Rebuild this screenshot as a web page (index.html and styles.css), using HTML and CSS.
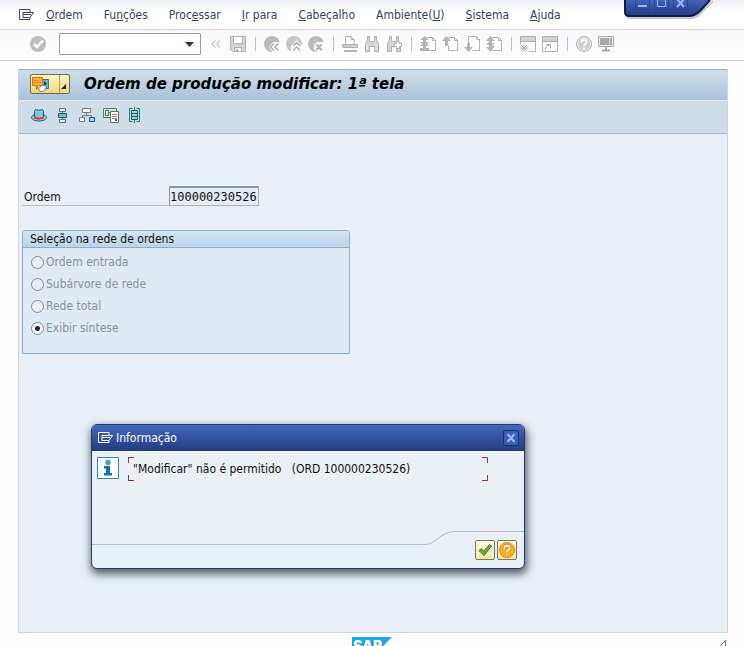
FILE: index.html
```html
<!DOCTYPE html>
<html lang="pt">
<head>
<meta charset="utf-8">
<meta name="viewport" content="width=device-width, initial-scale=1">
<title>Ordem de produção modificar: 1ª tela</title>
<link rel="stylesheet" href="styles.css">
</head>
<body>
<nav class="menubar">
  <button class="menu-icon" aria-label="Menu"><svg width="16" height="12" viewBox="0 0 16 12" fill="none" stroke="#3b4469"><path d="M11 3V.5H.5v10H11V9M4 3.500H14.500L11 8.500H4zM4 5.500h8"/></svg></button>
  <a href="#"><u>O</u>rdem</a>
  <a href="#">Fu<u>n</u>ções</a>
  <a href="#">Proc<u>e</u>ssar</a>
  <a href="#"><u>I</u>r para</a>
  <a href="#"><u>C</u>abeçalho</a>
  <a href="#">Ambiente(<u>U</u>)</a>
  <a href="#"><u>S</u>istema</a>
  <a href="#"><u>A</u>juda</a>
</nav>

<div class="window-controls">
  <svg class="tab-shape" width="96" height="24" viewBox="0 0 96 24">
    <defs><linearGradient id="tab" x2="0" y2="1"><stop stop-color="#4163ba"/><stop offset="1" stop-color="#203c88"/></linearGradient></defs>
    <path d="M3 0V15Q3 18 6 18H66Q73 18 78 12L89 1" fill="none" stroke="#c3c8d5" stroke-width="2"/>
    <path d="M1 0V12Q1 16 5 16H65Q71 16 76 11L86 0" fill="url(#tab)" stroke="#101b3f" stroke-width="2"/>
  </svg>
  <div class="control-row">
    <button aria-label="Minimizar"><svg width="13" height="9" viewBox="0 0 13 9"><path d="M2 6h9" stroke="#9fb6f4" stroke-width="2"/></svg></button>
    <button aria-label="Maximizar"><svg width="13" height="9" viewBox="0 0 13 9"><path d="M2.500 0v6.500h8V0" fill="none" stroke="#9fb6f4"/></svg></button>
    <button aria-label="Fechar"><svg width="13" height="9" viewBox="0 0 13 9"><path d="M3 -1l7 8M10 -1L3 7" stroke="#9fb6f4" stroke-width="2"/></svg></button>
  </div>
</div>

<div class="toolbar">
  <button class="tool enter" aria-label="Entrar"><svg viewBox="0 0 16 16"><circle cx="8" cy="8" r="8" fill="#bdbdbd"/><path d="M4 8l3 3 6-6.500" fill="none" stroke="#fff" stroke-width="2.500"/></svg></button>
  <div class="command"><input type="text" aria-label="Comando"><button aria-label="Abrir lista"><svg width="9" height="5" viewBox="0 0 9 5"><path d="M0 0h9L4.500 5z" fill="#26365f"/></svg></button></div>
  <button class="tool" aria-label="Recolher"><svg viewBox="0 0 16 16" fill="none" stroke="#cfcfcf" stroke-width="1.500"><path d="M7.500 4.500L4 8l3.500 3.500M12 4.500L8.500 8l3.500 3.500"/></svg></button>
  <button class="tool" aria-label="Gravar"><svg viewBox="0 0 16 16"><path d="M.5.5h15v15H2.500l-2-2z" fill="#d6d6d6" stroke="#b0b0b0"/><path d="M3.500.5h9v7h-9zM4.500 11.500h7v4h-7z" fill="#fff" stroke="#b0b0b0"/><path d="M6 13h2v2H6z" fill="#aaa"/></svg></button>
  <span class="sep"></span>
  <button class="tool" aria-label="Voltar"><svg viewBox="0 0 16 16"><circle cx="8" cy="8" r="8" fill="#b9b9b9"/><path d="M5 11l4-5h8v11H9z" fill="#fcfcfd"/><path d="M10 7.500L6.500 11l3.500 3.500M14.500 7.500L11 11l3.500 3.500" fill="none" stroke="#b0b0b0" stroke-width="1.500"/></svg></button>
  <button class="tool" aria-label="Encerrar"><svg viewBox="0 0 16 16"><circle cx="8" cy="8" r="8" fill="#c6c6c6"/><path d="M5 10l5.500-6 5.500 6v6H5z" fill="#fcfcfd"/><path d="M7 10l3.500-3.500L14 10M7 14.500l3.500-3.500 3.500 3.500" fill="none" stroke="#b0b0b0" stroke-width="1.500"/></svg></button>
  <button class="tool" aria-label="Cancelar"><svg viewBox="0 0 16 16"><circle cx="8" cy="8" r="8" fill="#bdbdbd"/><path d="M6 9l3-3h7v10H9l-3-3z" fill="#fcfcfd"/><path d="M8.500 8.500l5 5.500M13.500 8.500l-5 5.500" stroke="#b0b0b0" stroke-width="2"/></svg></button>
  <span class="sep"></span>
  <button class="tool" aria-label="Imprimir"><svg viewBox="0 0 16 16"><path d="M3.500 8.500v-8H9l3 3v5" fill="#fff" stroke="#b0b0b0"/><path d="M9 .5v3h3" fill="none" stroke="#b0b0b0"/><path d="M.5 8.500h15v3H.5z" fill="#d0d0d0" stroke="#b0b0b0"/><path d="M2 14h13v2H2z" fill="#b5b5b5"/></svg></button>
  <button class="tool" aria-label="Procurar"><svg viewBox="0 0 16 16"><path d="M3.500.5h2v4l1 1h3l1-1v-4h2v4l2 3v8h-4v-5h-5v5h-4v-8l2-3z" fill="#d4d4d4" stroke="#b0b0b0"/><path d="M3 8v6M12 8v6" stroke="#eee"/></svg></button>
  <button class="tool" aria-label="Continuar procura"><svg viewBox="0 0 16 16"><path d="M3.500.5h2v4l1 1h3l1-1v-4h2v4l2 3v8h-4v-5h-5v5h-4v-8l2-3z" fill="#d4d4d4" stroke="#b0b0b0"/><path d="M10.500 5.500h3v2h2v3h-2v2h-3v-2h-2v-3h2z" fill="#fff" stroke="#b0b0b0"/></svg></button>
  <span class="sep"></span>
  <button class="tool" aria-label="Primeira página"><svg viewBox="0 0 16 16"><path d="M6.500 1.500h6l3 3v10h-9" fill="#fff" stroke="#b0b0b0"/><path d="M12.500 1.500v3h3" fill="none" stroke="#b0b0b0"/><path d="M4.500 0L9 4H6v2h3L4.500 10 0 6h3V4H0zM4.500 6L9 10H6v2h3v3H0v-3h3v-2H0z" fill="#b5b5b5"/></svg></button>
  <button class="tool" aria-label="Página anterior"><svg viewBox="0 0 16 16"><path d="M6.500 1.500h6l3 3v10h-9v-5" fill="#fff" stroke="#b0b0b0"/><path d="M12.500 1.500v3h3" fill="none" stroke="#b0b0b0"/><path d="M4.500 0L9 5H6v5H3V5H0z" fill="#b5b5b5"/></svg></button>
  <button class="tool" aria-label="Próxima página"><svg viewBox="0 0 16 16"><path d="M4.500 7V.5h8l3 3v11h-7" fill="#fff" stroke="#b0b0b0"/><path d="M12.500.5v3h3" fill="none" stroke="#b0b0b0"/><path d="M4.500 16L0 11h3V7h3v4h3z" fill="#b5b5b5"/></svg></button>
  <button class="tool" aria-label="Última página"><svg viewBox="0 0 16 16"><path d="M6.500 1.500h6l3 3v10h-9" fill="#fff" stroke="#b0b0b0"/><path d="M12.500 1.500v3h3" fill="none" stroke="#b0b0b0"/><path d="M4.500 0L9 5H6v2h3L6 10h3l-4.500 6L0 11h3V9H0l3-3V5H0z" fill="#b5b5b5"/></svg></button>
  <span class="sep"></span>
  <button class="tool" aria-label="Novo modo"><svg viewBox="0 0 16 16"><path d="M.5 8V.5h15v15H9" fill="#fdfdfd" stroke="#b0b0b0"/><path d="M1 1h14v4H1z" fill="#d2d2d2"/><path d="M0 5.500h16M4 8v8M0 12h8M1 9l6 6M7 9l-6 6" stroke="#b0b0b0"/></svg></button>
  <button class="tool" aria-label="Criar atalho"><svg viewBox="0 0 16 16"><path d="M.5.5h15v15H.5z" fill="#fdfdfd" stroke="#b0b0b0"/><path d="M1 1h14v4H1z" fill="#d2d2d2"/><path d="M1 5.500h14M3.500 14c0-3 1-4 4-5M4.500 8.500h4V12" fill="none" stroke="#aaa"/></svg></button>
  <span class="sep"></span>
  <button class="tool" aria-label="Ajuda"><svg viewBox="0 0 16 16"><circle cx="8" cy="8" r="7.500" fill="#d0d0d0" stroke="#b0b0b0"/><circle cx="8" cy="8" r="6.500" fill="none" stroke="#fff" stroke-width=".7"/><path d="M5.500 6.500C5.500 3 10.500 3 10.500 6c0 2-2.500 2-2.500 4M8 11.500V13" fill="none" stroke="#fff" stroke-width="1.800"/></svg></button>
  <button class="tool" aria-label="Configurar layout"><svg viewBox="0 0 16 16"><path d="M.5.500h15v10H.5z" fill="#ededed" stroke="#b0b0b0"/><path d="M2 2h12v7H2z" fill="#aaa"/><path d="M11 2h1v7h-1z" fill="#ddd"/><path d="M8 11v3M4 14.500h8" stroke="#aaa" stroke-width="2"/></svg></button>
</div>

<main class="screen">
  <header class="titlebar">
    <button class="services" aria-label="Serviços para objeto">
      <svg width="17" height="15" viewBox="0 0 17 15"><path d="M9.500 2.500h7v9h-7z" fill="#67b7df" stroke="#277b9f"/><path d="M.5.500h10v8h-4l-2 4v-4h-4z" fill="#ffb52b" stroke="#d96a12"/><path d="M2 3.500h7M2 5.500h7" stroke="#ed7418" stroke-dasharray="2 1"/><path d="M12 4l3 2.500L12 9z" fill="#173c5c"/><path d="M6.500 12L10 8l4 1v2l-3 3.500H8z" fill="#fff" stroke="#6d7c87"/></svg>
      <span class="services-arrow"><svg width="5" height="5" viewBox="0 0 5 5"><path d="M5 0v5H0z" fill="#222"/></svg></span>
    </button>
    <h1>Ordem de produção modificar: 1ª tela</h1>
  </header>
  <div class="app-toolbar">
    <button class="tool" aria-label="Cabeçalho"><svg viewBox="0 0 16 16"><ellipse cx="8" cy="10.500" rx="7.500" ry="3.500" fill="#a9d3e8" stroke="#155978"/><path d="M3.500 10V4.500C3.500 2 6 2.500 8 3.500c2-1 4.500-1.500 4.500 1V10c-2 2-7 2-9 0z" fill="#86c2e0" stroke="#155978"/><path d="M3 9.500c2 1.500 8 1.500 10 0v2c-3 1.500-7 1.500-10 0z" fill="#d83a2c"/></svg></button>
    <button class="tool" aria-label="Operações"><svg viewBox="0 0 16 16" fill="#e9eef2" stroke="#5f686e"><path d="M4.500 1.500h6v3h-6zM4.500 12.500h6v3h-6zM7.500 4.500v2M7.500 10.500v2"/><path d="M3.500 6.500h8v4h-8z" fill="#6fb9dc" stroke="#155978"/></svg></button>
    <button class="tool" aria-label="Hierarquia"><svg viewBox="0 0 16 16" fill="#f4f6f8" stroke="#747b80"><path d="M3.500 1.500h8v4h-8zM7.500 5.500v3" /><path d="M3.500 10V8.500h9V10" fill="none"/><path d="M.5 10.500h5v4h-5z"/><path d="M10.500 10.500h5v4h-5z" fill="#a7d5ec" stroke="#155978"/></svg></button>
    <button class="tool" aria-label="Documentos"><svg viewBox="0 0 16 16"><path d="M.5 1.500h13v9H.5z" fill="#d5e5d9" stroke="#4b8064"/><path d="M2.500 3.500h3v5h-3zM6 5.500h4" fill="none" stroke="#4b8064"/><path d="M7.500 4.500h8v11h-8z" fill="#fff" stroke="#6b6769"/><path d="M9 7.500h5M9 9.500h5M9 11.500h5" stroke="#8a8888"/><path d="M12 12h2v2h-2z" fill="#c84035"/></svg></button>
    <button class="tool" aria-label="Componentes"><svg viewBox="0 0 16 16" fill="none"><path d="M5.500 1.500h-3v13h3M9.500 1.500h3v13h-3M7.500 0v16" stroke="#23834e"/><path d="M4.500 3.500h6v9h-6z" fill="#9ed2e9" stroke="#155978"/><path d="M4.500 6.500h6M4.500 9.500h6" stroke="#155978"/></svg></button>
  </div>
  <form class="content">
    <div class="field"><label for="ordem">Ordem</label><input id="ordem" type="text" value="100000230526" readonly></div>
    <section class="group" aria-labelledby="grupo">
      <h2 id="grupo">Seleção na rede de ordens</h2>
      <div class="options">
        <label><input type="radio" name="rede" disabled>Ordem entrada</label>
        <label><input type="radio" name="rede" disabled>Subárvore de rede</label>
        <label><input type="radio" name="rede" disabled>Rede total</label>
        <label><input type="radio" name="rede" checked disabled>Exibir síntese</label>
      </div>
    </section>
  </form>
</main>

<footer class="status">
  <svg class="logo" width="40" height="20" viewBox="0 0 40 20" role="img" aria-label="SAP"><defs><linearGradient id="sap" x2="0" y2="1"><stop stop-color="#19aee8"/><stop offset="1" stop-color="#1c70b8"/></linearGradient></defs><path d="M0 0h40L20 20H0z" fill="url(#sap)"/><text x="1" y="14" class="logo-text">SAP</text></svg>
  <svg class="grip" width="10" height="10" viewBox="0 0 10 10" fill="#fff" stroke="#68788d"><path d="M8.500 0v10M0 9.500L8.500.5"/></svg>
</footer>

<div class="dialog" role="dialog" aria-labelledby="info-title">
  <header class="dialog-title">
    <svg width="16" height="12" viewBox="0 0 16 12" fill="none" stroke="#fff"><path d="M11 3V.5H.5v10H11V9M4 3.500H14.500L11 8.500H4zM4 5.500h8"/></svg>
    <h2 id="info-title">Informação</h2>
    <button class="close" aria-label="Fechar"><svg width="10" height="10" viewBox="0 0 10 10"><path d="M1.500 1l7 8M8.500 1l-7 8" stroke="#9db9ff" stroke-width="2"/></svg></button>
  </header>
  <div class="message">
    <svg width="22" height="22" viewBox="0 0 22 22"><path d="M.5.500h21v21H.5z" fill="#fff" stroke="#2785b7"/><circle cx="11" cy="5.500" r="2.700" fill="#4b9cb8"/><path d="M7 9h6v7h2v2.500H7V16h2v-4.500H7z" fill="#0875b4"/></svg>
    <div class="marked">
      <p>"Modificar" não é permitido   (ORD 100000230526)</p>
      <svg width="6" height="24" viewBox="0 0 6 24" fill="none" stroke="#b51f3a"><path d="M0 .5h5.500V6M0 23.500h5.500V18"/></svg>
    </div>
  </div>
  <footer class="dialog-foot">
    <span class="foot-line"></span>
    <svg width="34" height="14" viewBox="0 0 34 14" fill="none" stroke="#b3bfc7"><path d="M0 13.500h3C12 13.500 18 .5 32 .5h2"/></svg>
    <div class="actions">
      <button aria-label="Continuar"><svg width="14" height="14" viewBox="0 0 14 14"><path d="M1 7.500L3.500 5.500 5.500 8.500 11.500 1.500 13.500 3 6 12.500z" fill="#68ae43" stroke="#347a2c"/></svg></button>
      <button aria-label="Ajuda"><svg width="16" height="16" viewBox="0 0 16 16"><circle cx="8" cy="8" r="7.500" fill="#ffb21b" stroke="#e18b0c"/><path d="M5.300 6.500C5.300 2.800 10.700 2.800 10.700 6c0 2-2.700 2-2.700 4M8 11.500v2" fill="none" stroke="#b86a12" stroke-width="3"/><path d="M5.300 6.500C5.300 2.800 10.700 2.800 10.700 6c0 2-2.700 2-2.700 4M8 11.500v2" fill="none" stroke="#fff" stroke-width="1.800"/></svg></button>
    </div>
  </footer>
</div>
</body>
</html>
```
FILE: styles.css
```css
* { box-sizing: border-box; }

body {
  margin: 0;
  height: 100vh;
  display: flex;
  flex-direction: column;
  position: relative;
  overflow: hidden;
  background: #fdfdfe;
  color: #111;
  font: 12px/16px "DejaVu Sans Condensed", "DejaVu Sans", sans-serif;
}

button, input { font: inherit; color: inherit; margin: 0; }
button { padding: 0; border: 0; background: none; }
svg { display: block; flex: none; }
h1, h2, p { margin: 0; }

.menubar {
  flex: none;
  display: flex;
  align-items: center;
  gap: 21px;
  height: 30px;
  padding-left: 19px;
  border-bottom: 1px solid #d3d5d9;
  background: linear-gradient(#eceff5, #fff 10px);
  white-space: nowrap;
}
.menubar a { color: #343f68; text-decoration: none; }
.menu-icon { margin-right: -10px; }

.window-controls { position: absolute; top: 0; right: 24px; width: 96px; }
.control-row { position: absolute; top: 0; left: 11px; display: flex; gap: 4px; }
.control-row button { width: 15px; height: 10px; border: 1px solid #2a448e; border-top: 0; border-radius: 0 0 2px 2px; }

.toolbar {
  flex: none;
  display: flex;
  align-items: center;
  gap: 6px;
  height: 31px;
  padding: 0 30px 2px;
  border-bottom: 1px solid #cfd0dc;
  background: linear-gradient(#f9f9fb, #fff);
}
.tool { flex: none; width: 16px; height: 16px; }
.tool svg { width: 16px; height: 16px; overflow: hidden; }
.enter { margin-right: 7px; }
.sep { flex: none; width: 6px; height: 14px; background: linear-gradient(#a9c0da, #a9c0da) center / 1px 100% no-repeat; }
.command {
  flex: none;
  display: flex;
  align-items: center;
  width: 142px;
  height: 22px;
  margin-right: 1px;
  padding-right: 6px;
  border: 1px solid #96999d;
  border-radius: 1px;
  background: #fff;
}
.command input { flex: 1; min-width: 0; border: 0; background: none; outline: 0; }

.screen {
  flex: 1;
  min-height: 0;
  display: flex;
  flex-direction: column;
  margin: 8px 16px 0 18px;
  border: 1px solid #cdd5df;
  border-top: 0;
  background: #e8eff6;
}
.titlebar {
  flex: none;
  display: flex;
  align-items: center;
  gap: 14px;
  height: 32px;
  padding: 0 11px 2px;
  border-top: 1px solid #9fb0c2;
  border-bottom: 1px solid #e2ebf3;
  background: linear-gradient(#cfdfeb, #a9c2da);
}
.titlebar h1 { color: #000; font: italic bold 15px/22px "DejaVu Sans", sans-serif; white-space: nowrap; }
.services {
  flex: none;
  display: flex;
  align-items: center;
  width: 40px;
  height: 20px;
  padding-left: 1px;
  border: 1px solid #6d6a5a;
  border-radius: 2px;
  background: linear-gradient(#fff6c4, #f1d677);
}
.services-arrow { display: flex; align-items: flex-end; justify-content: flex-end; width: 10px; height: 18px; margin-left: 10px; padding: 0 3px 4px 0; border-left: 1px solid #ac9c62; }
.app-toolbar {
  flex: none;
  display: flex;
  align-items: flex-start;
  gap: 8px;
  height: 33px;
  padding: 6px 12px 0;
  border-bottom: 1px solid #a6b8ca;
  background: #cfdde9;
}

.content { flex: 1; padding: 52px 3px 0; }
.field { display: flex; align-items: flex-end; }
.field label { width: 147px; height: 18px; padding-left: 2px; border-bottom: 1px solid #b5bcc2; line-height: 18px; }
.field input {
  width: 90px;
  height: 20px;
  padding: 0;
  border: 1px solid #aab0b6;
  border-top: 2px solid #8f969d;
  border-left-color: #8f969d;
  border-radius: 0;
  outline: 0;
  background: #e3ecf7;
  font: 12px/16px "DejaVu Sans Mono", monospace;
}
.group { width: 328px; margin-top: 24px; border: 1px solid #8eadc9; border-radius: 3px 3px 0 0; background: #dfeaf4; }
.group h2 { padding: 0 7px; border-bottom: 1px solid #8eadc9; border-radius: 2px 2px 0 0; background: linear-gradient(#d4e4f1, #bcd4e9); font-size: 12px; line-height: 16px; font-weight: normal; }
.options { padding: 3px 8px 14px; }
.options label { display: flex; align-items: center; gap: 2px; height: 22px; color: #8b929a; }
.options input { appearance: none; width: 13px; height: 13px; border: 1px solid #858b92; border-radius: 50%; background: #e8eff6; }
.options input:checked { background: radial-gradient(circle, #1d2536 2px, #f4f6f9 3px); }

.status { flex: none; display: flex; justify-content: center; position: relative; height: 13px; padding-top: 4px; overflow: hidden; }
.logo-text { fill: #fff; font: 900 14px Inter, "Liberation Sans", sans-serif; }
.grip { position: absolute; top: 7px; right: 17px; }

.dialog {
  position: absolute;
  top: 424px;
  left: 91px;
  width: 434px;
  overflow: hidden;
  border: 1px solid #223a5e;
  border-radius: 6px;
  background: #e9f0f6;
  box-shadow: 1px 4px 8px 1px rgba(30, 42, 58, .75);
}
.dialog-title { display: flex; align-items: center; gap: 2px; height: 26px; padding: 0 5px 0 6px; background: linear-gradient(#4467bd, #213c80); color: #fff; }
.dialog-title h2 { flex: 1; font-size: 12px; line-height: 16px; font-weight: normal; }
.close { display: grid; place-items: center; width: 16px; height: 16px; border: 1px solid #1b3068; border-radius: 2px; background: #3d5fb2; }
.message { display: flex; gap: 9px; min-height: 80px; padding: 6px 36px 0 5px; }
.marked {
  flex: 1;
  display: flex;
  align-items: center;
  justify-content: space-between;
  height: 24px;
  padding-left: 5px;
  background:
    linear-gradient(#b51f3a, #b51f3a) 0 0 / 6px 1px no-repeat,
    linear-gradient(#b51f3a, #b51f3a) 0 0 / 1px 6px no-repeat,
    linear-gradient(#b51f3a, #b51f3a) 0 100% / 6px 1px no-repeat,
    linear-gradient(#b51f3a, #b51f3a) 0 100% / 1px 6px no-repeat;
}
.marked p { white-space: pre; }
.dialog-foot { display: flex; height: 37px; }
.foot-line { flex: 1; height: 14px; border-bottom: 1px solid #b3bfc7; }
.actions { display: flex; justify-content: flex-end; gap: 2px; width: 67px; padding: 8px 7px 0 0; border-top: 1px solid #b3bfc7; }
.actions button { display: grid; place-items: center; width: 20px; height: 20px; border: 1px solid #77766c; border-radius: 2px; background: linear-gradient(#fffbe0, #f3e7a4); }
```
